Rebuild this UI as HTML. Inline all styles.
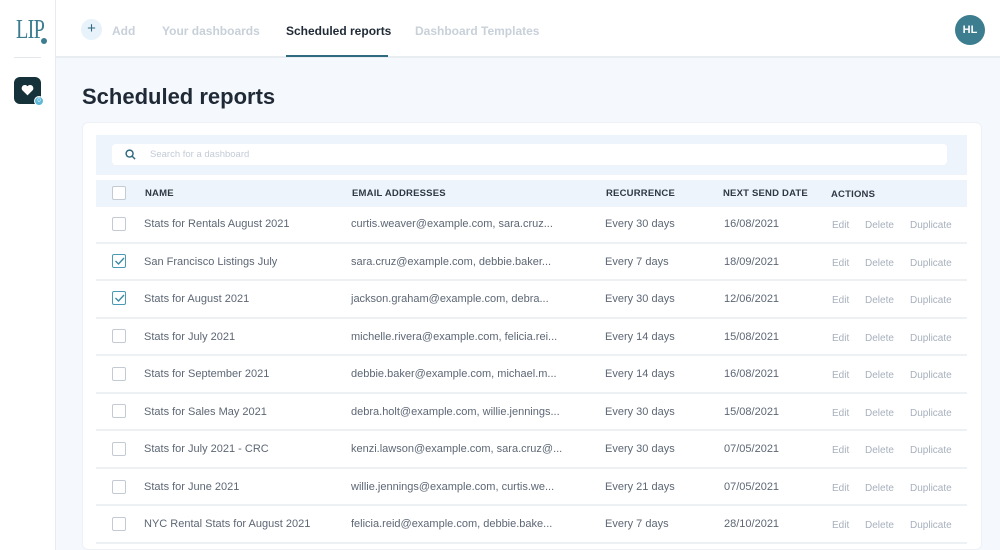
<!DOCTYPE html>
<html><head><meta charset="utf-8"><style>
*{margin:0;padding:0;box-sizing:border-box}
html,body{width:1000px;height:550px;overflow:hidden}
body{font-family:"Liberation Sans",sans-serif;background:#f5f9fd;position:relative}
.side{position:absolute;left:0;top:0;width:56px;height:550px;background:#fff;border-right:1px solid #e6ebf0}
.top{position:absolute;left:56px;top:0;width:944px;height:58px;background:#fff;border-bottom:2px solid #e8edf2}
.t{position:absolute;font-size:12px;font-weight:bold;top:24px}
.a{position:absolute;white-space:nowrap}
.card{position:absolute;left:82px;top:122px;width:900px;height:428px;background:#fff;border:1px solid #edf1f5;border-radius:6px}
.cb{position:absolute;left:112px;width:14px;height:14px;border:1px solid #c3cad3;border-radius:2px;background:#fff}
.row{position:absolute;left:96px;width:871px;height:37.5px;border-bottom:2px solid #eef1f4;font-size:11px;color:#5d6775}
.row span{position:absolute;top:12px;white-space:nowrap}
.act{color:#a7b0bd;font-size:10px;top:14px!important}
.h{position:absolute;font-size:9.5px;font-weight:bold;color:#2f3845;letter-spacing:.2px}
</style></head><body>
<div class="side">
 <div class="a" style="left:16px;top:14px;font-family:'Liberation Serif',serif;font-size:27px;color:#3c7d90;letter-spacing:-1px;transform:scaleX(0.75);transform-origin:left">LIP</div>
 <div class="a" style="left:41px;top:38px;width:6px;height:6px;border-radius:50%;background:#3c7d90"></div>
 <div class="a" style="left:14px;top:57px;width:27px;height:1px;background:#e3e7eb"></div>
 <div class="a" style="left:14px;top:77px;width:27px;height:27px;border-radius:6px;background:#15313a"></div>
 <svg class="a" style="left:21px;top:84px" width="13" height="12" viewBox="0 0 24 22"><path d="M12 21L2.5 11.5A5.5 5.5 0 0 1 12 4a5.5 5.5 0 0 1 9.5 7.5z" fill="#fff"/></svg>
 <div class="a" style="left:34px;top:96px;width:10px;height:10px;border-radius:50%;background:#5fb8d8;border:1px solid #fff;color:#fff;font-size:6px;text-align:center;line-height:8px">0</div>
</div>
<div class="top">
 <div class="a" style="left:25px;top:19px;width:21px;height:21px;border-radius:50%;background:#e7f2fa;color:#2f6a80;font-size:15px;text-align:center;line-height:20px">+</div>
 <div class="t" style="left:56px;color:#c8d0d9">Add</div>
 <div class="t" style="left:106px;color:#c8d0d9">Your dashboards</div>
 <div class="t" style="left:230px;color:#1f2a36">Scheduled reports</div>
 <div class="a" style="left:230px;top:55px;width:102px;height:2px;background:#2f6a80"></div>
 <div class="t" style="left:359px;color:#c8d0d9">Dashboard Templates</div>
 <div class="a" style="left:899px;top:15px;width:30px;height:30px;border-radius:50%;background:#3c7d90;color:#fff;font-size:11px;font-weight:bold;text-align:center;line-height:30px">HL</div>
</div>
<div class="a" style="left:82px;top:84px;font-size:22px;font-weight:bold;color:#1f2a36">Scheduled reports</div>
<div class="card"></div>
<div class="a" style="left:96px;top:135px;width:871px;height:40px;background:#eef4fb"></div>
<div class="a" style="left:112px;top:144px;width:835px;height:21px;background:#fff;border-radius:4px"></div>
<svg class="a" style="left:125px;top:149px" width="11" height="11" viewBox="0 0 12 12"><circle cx="5" cy="5" r="3.8" fill="none" stroke="#2f6a80" stroke-width="1.6"/><path d="M8 8l3 3" stroke="#2f6a80" stroke-width="1.6"/></svg>
<div class="a" style="left:150px;top:149px;font-size:9.5px;color:#c3cbd6">Search for a dashboard</div>
<div class="a" style="left:96px;top:180px;width:871px;height:27px;background:#eef4fb"></div>
<div class="cb" style="top:186px"></div>
<div class="h" style="left:145px;top:188px">NAME</div>
<div class="h" style="left:352px;top:188px">EMAIL ADDRESSES</div>
<div class="h" style="left:606px;top:188px">RECURRENCE</div>
<div class="h" style="left:723px;top:188px">NEXT SEND DATE</div>
<div class="h" style="left:831px;top:189px">ACTIONS</div>
<div class="row" style="top:206px"><span style="left:48px">Stats for Rentals August 2021</span><span style="left:255px">curtis.weaver@example.com, sara.cruz...</span><span style="left:509px">Every 30 days</span><span style="left:628px">16/08/2021</span><span class="act" style="left:736px">Edit</span><span class="act" style="left:769px">Delete</span><span class="act" style="left:814px">Duplicate</span></div>
<div class="row" style="top:243.5px"><span style="left:48px">San Francisco Listings July</span><span style="left:255px">sara.cruz@example.com, debbie.baker...</span><span style="left:509px">Every 7 days</span><span style="left:628px">18/09/2021</span><span class="act" style="left:736px">Edit</span><span class="act" style="left:769px">Delete</span><span class="act" style="left:814px">Duplicate</span></div>
<div class="row" style="top:281px"><span style="left:48px">Stats for August 2021</span><span style="left:255px">jackson.graham@example.com, debra...</span><span style="left:509px">Every 30 days</span><span style="left:628px">12/06/2021</span><span class="act" style="left:736px">Edit</span><span class="act" style="left:769px">Delete</span><span class="act" style="left:814px">Duplicate</span></div>
<div class="row" style="top:318.5px"><span style="left:48px">Stats for July 2021</span><span style="left:255px">michelle.rivera@example.com, felicia.rei...</span><span style="left:509px">Every 14 days</span><span style="left:628px">15/08/2021</span><span class="act" style="left:736px">Edit</span><span class="act" style="left:769px">Delete</span><span class="act" style="left:814px">Duplicate</span></div>
<div class="row" style="top:356px"><span style="left:48px">Stats for September 2021</span><span style="left:255px">debbie.baker@example.com, michael.m...</span><span style="left:509px">Every 14 days</span><span style="left:628px">16/08/2021</span><span class="act" style="left:736px">Edit</span><span class="act" style="left:769px">Delete</span><span class="act" style="left:814px">Duplicate</span></div>
<div class="row" style="top:393.5px"><span style="left:48px">Stats for Sales May 2021</span><span style="left:255px">debra.holt@example.com, willie.jennings...</span><span style="left:509px">Every 30 days</span><span style="left:628px">15/08/2021</span><span class="act" style="left:736px">Edit</span><span class="act" style="left:769px">Delete</span><span class="act" style="left:814px">Duplicate</span></div>
<div class="row" style="top:431px"><span style="left:48px">Stats for July 2021 - CRC</span><span style="left:255px">kenzi.lawson@example.com, sara.cruz@...</span><span style="left:509px">Every 30 days</span><span style="left:628px">07/05/2021</span><span class="act" style="left:736px">Edit</span><span class="act" style="left:769px">Delete</span><span class="act" style="left:814px">Duplicate</span></div>
<div class="row" style="top:468.5px"><span style="left:48px">Stats for June 2021</span><span style="left:255px">willie.jennings@example.com, curtis.we...</span><span style="left:509px">Every 21 days</span><span style="left:628px">07/05/2021</span><span class="act" style="left:736px">Edit</span><span class="act" style="left:769px">Delete</span><span class="act" style="left:814px">Duplicate</span></div>
<div class="row" style="top:506px"><span style="left:48px">NYC Rental Stats for August 2021</span><span style="left:255px">felicia.reid@example.com, debbie.bake...</span><span style="left:509px">Every 7 days</span><span style="left:628px">28/10/2021</span><span class="act" style="left:736px">Edit</span><span class="act" style="left:769px">Delete</span><span class="act" style="left:814px">Duplicate</span></div>
<div class="cb" style="top:217px"></div>
<div class="cb" style="top:254px;border-color:#4a9ab5"></div>
<svg class="a" style="left:114px;top:256px" width="11" height="10" viewBox="0 0 11 10"><path d="M1.5 5l3 3L10 2" fill="none" stroke="#3c8aa5" stroke-width="1.4"/></svg>
<div class="cb" style="top:291px;border-color:#4a9ab5"></div>
<svg class="a" style="left:114px;top:293px" width="11" height="10" viewBox="0 0 11 10"><path d="M1.5 5l3 3L10 2" fill="none" stroke="#3c8aa5" stroke-width="1.4"/></svg>
<div class="cb" style="top:329px"></div>
<div class="cb" style="top:367px"></div>
<div class="cb" style="top:404px"></div>
<div class="cb" style="top:442px"></div>
<div class="cb" style="top:480px"></div>
<div class="cb" style="top:517px"></div>
</body></html>
